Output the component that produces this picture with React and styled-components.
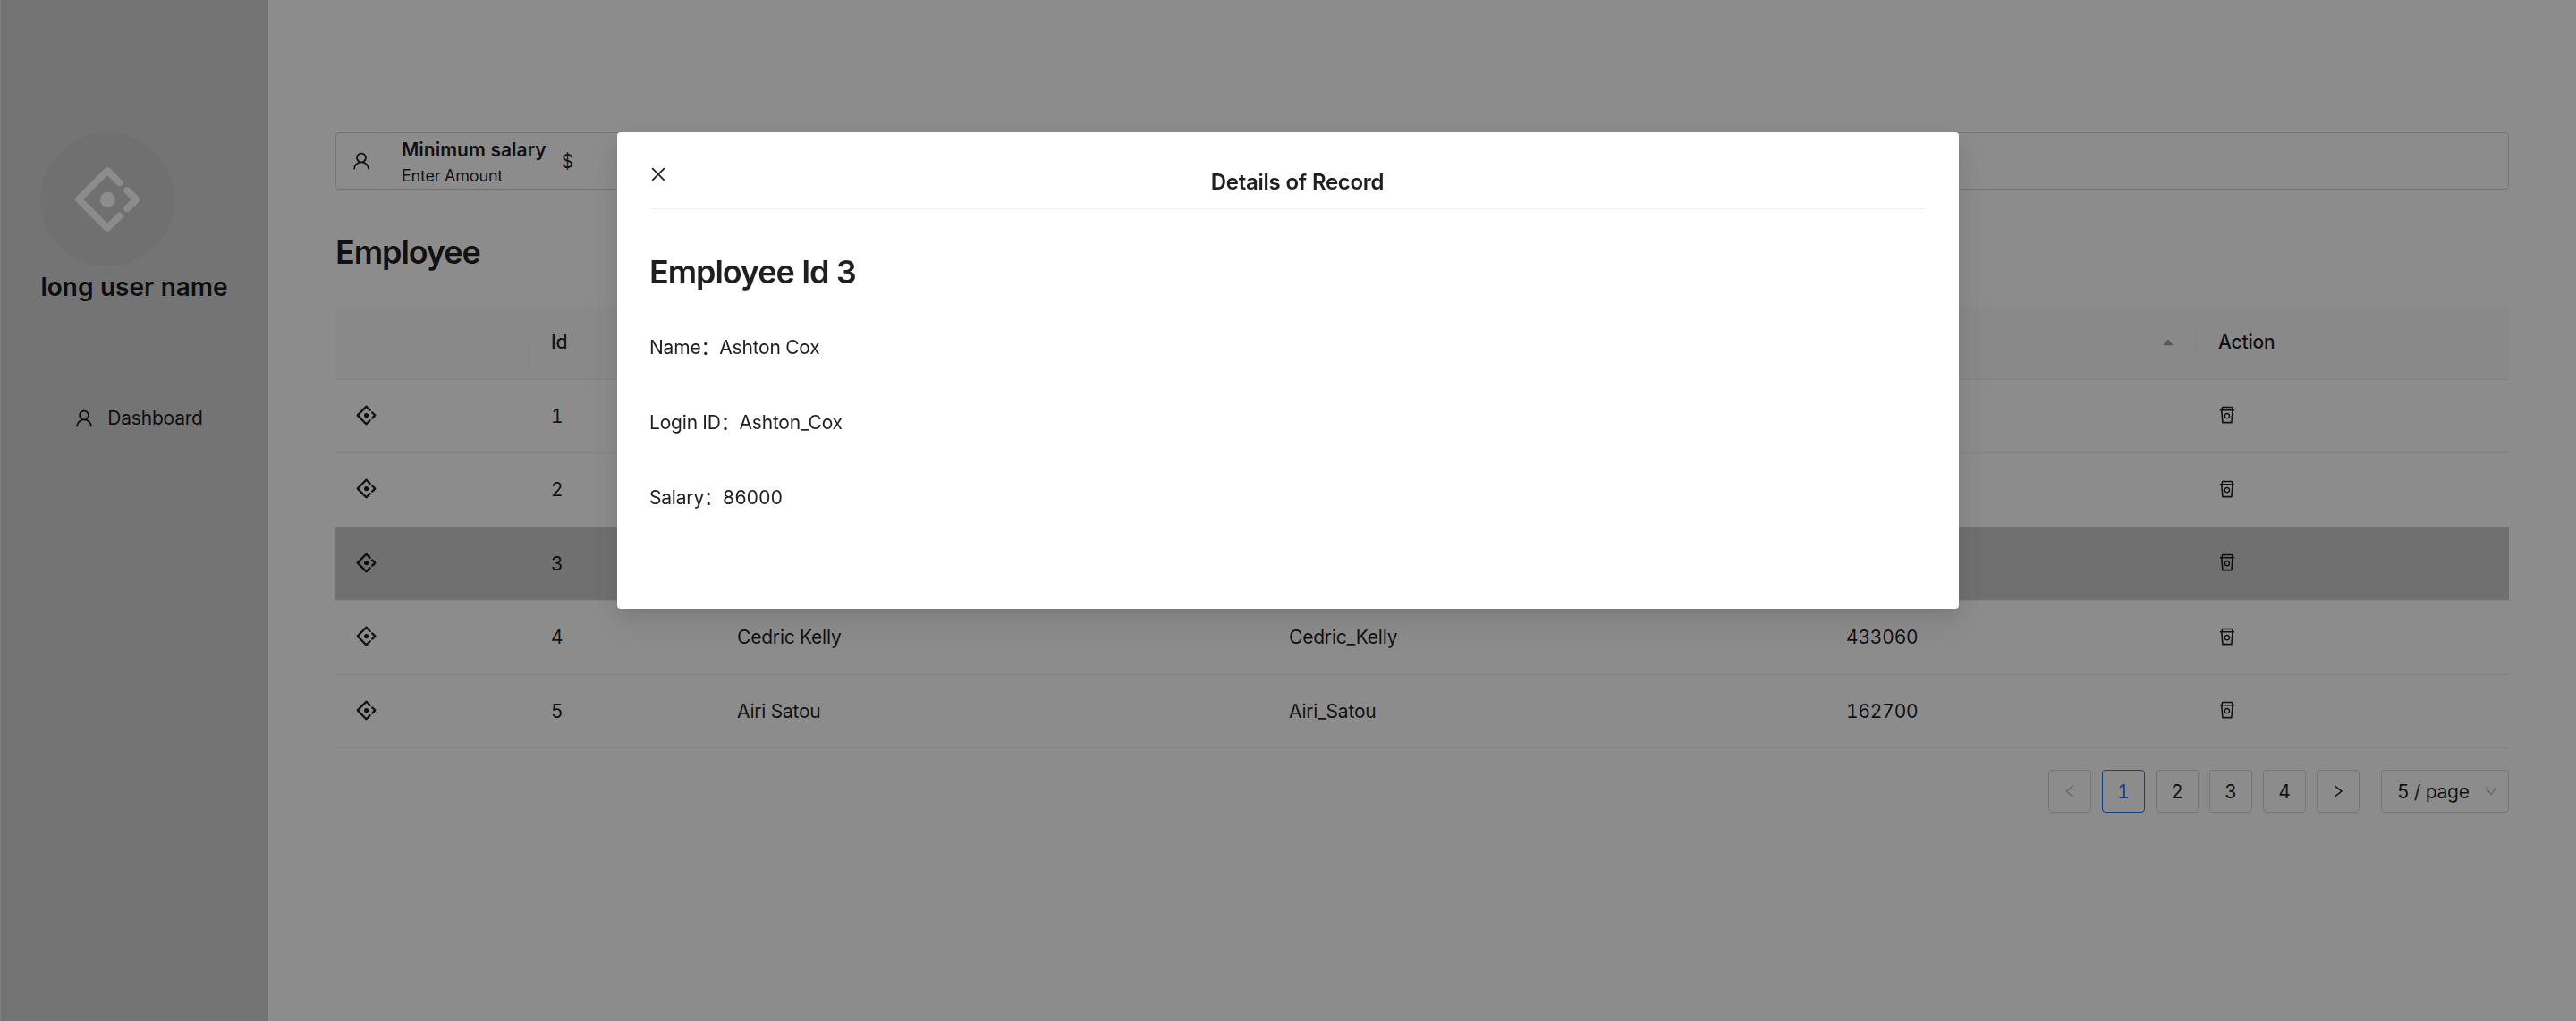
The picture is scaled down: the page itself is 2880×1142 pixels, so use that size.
import styled, { createGlobalStyle } from "styled-components";
import {
  AiOutlineAntDesign,
  AiOutlineClose,
  AiOutlineDown,
  AiOutlineLeft,
  AiOutlineRest,
  AiOutlineRight,
  AiOutlineUser,
  AiFillCaretUp,
} from "react-icons/ai";

const employees = [
  { id: 1, name: "Tiger Nixon", login: "Tiger_Nixon", salary: 320800 },
  { id: 2, name: "Garrett Winters", login: "Garrett_Winters", salary: 170750 },
  { id: 3, name: "Ashton Cox", login: "Ashton_Cox", salary: 86000 },
  { id: 4, name: "Cedric Kelly", login: "Cedric_Kelly", salary: 433060 },
  { id: 5, name: "Airi Satou", login: "Airi_Satou", salary: 162700 },
];

const GlobalStyle = createGlobalStyle`
  * {
    box-sizing: border-box;
  }
  html, body {
    margin: 0;
    height: 100%;
    background: #fff;
  }
  body {
    font-family: Inter, "Noto Sans CJK SC", sans-serif;
    font-size: 21px;
    line-height: 33px;
    letter-spacing: -0.2px;
    font-variant-numeric: tabular-nums;
    color: rgba(0, 0, 0, 0.88);
  }
`;

const Page = styled.div`
  display: flex;
  height: 100vh;
  overflow: hidden;
`;

const Sidebar = styled.aside`
  flex: 0 0 300px;
  display: flex;
  flex-direction: column;
  align-items: center;
  padding-top: 148px;
  border-left: 1px solid #eaeaea;
  background: #d4d4d4;
`;

const Avatar = styled.div`
  width: 150px;
  height: 150px;
  align-self: flex-start;
  margin-left: 44px;
  border-radius: 50%;
  display: flex;
  align-items: center;
  justify-content: center;
  background: #cccccc;
  color: #fff;
  font-size: 82px;
`;

const UserName = styled.div`
  margin-top: 3px;
  margin-right: 1px;
  font-size: 28px;
  line-height: 40px;
  font-weight: 600;
  letter-spacing: 0;
`;

const MenuItem = styled.div`
  display: flex;
  align-items: center;
  gap: 14px;
  margin-top: 110px;
  margin-left: 8px;
  svg {
    font-size: 24px;
  }
`;

const Main = styled.main`
  flex: 1;
  min-width: 0;
  padding: 148px 75px 0;
`;

const InputGroup = styled.div`
  display: flex;
  height: 64px;
  border: 1.5px solid #d9d9d9;
  border-radius: 4px;
`;

const InputAddon = styled.div`
  flex: 0 0 56px;
  display: flex;
  align-items: center;
  justify-content: center;
  border-right: 1.5px solid #d9d9d9;
  font-size: 24px;
`;

const InputBody = styled.div`
  display: flex;
  align-items: center;
  padding-left: 17px;
  gap: 17px;
`;

const InputLabels = styled.div`
  display: flex;
  flex-direction: column;
`;

const InputLabel = styled.span`
  font-weight: 600;
  line-height: 33px;
  letter-spacing: 0;
  margin-top: -1px;
`;

const InputHint = styled.span`
  font-size: 18px;
  line-height: 24px;
  margin-top: 1px;
`;

const PageTitle = styled.h1`
  margin: 48px 0 38px;
  font-size: 36px;
  line-height: 44px;
  font-weight: 600;
  letter-spacing: -1.1px;
`;

const Row = styled.div`
  display: grid;
  grid-template-columns: 216px 208px 617px 623px 416px 350px;
  height: 82.5px;
  align-items: center;
  border-bottom: 1.5px solid #f0f0f0;
  background: ${({ $selected, $head }) =>
    $selected ? "#cccccc" : $head ? "#fafafa" : "transparent"};
  font-weight: ${({ $head }) => ($head ? 500 : 400)};
`;

const Cell = styled.div`
  position: relative;
  display: flex;
  align-items: center;
  justify-content: space-between;
  padding: 0 25px;
  ${({ $divider }) =>
    $divider &&
    `&::after {
      content: "";
      position: absolute;
      right: 0;
      top: 0;
      height: 33px;
      border-right: 1.5px solid #f0f0f0;
    }`}
`;

const RowIcon = styled(AiOutlineAntDesign)`
  font-size: 25px;
  margin-left: -3px;
  margin-top: -2px;
`;

const ActionIcon = styled(AiOutlineRest)`
  font-size: 24px;
  margin-left: -2px;
  margin-top: -2px;
`;

const SortIcon = styled(AiFillCaretUp)`
  font-size: 16px;
  color: #a3a3a3;
  margin-right: -2px;
`;

const Pagination = styled.nav`
  display: flex;
  justify-content: flex-end;
  gap: 12px;
  margin-top: 24px;
`;

const PageButton = styled.div`
  width: 48px;
  height: 48px;
  display: flex;
  align-items: center;
  justify-content: center;
  border: 1.5px solid ${({ $active }) => ($active ? "#1677ff" : "#d9d9d9")};
  border-radius: 4px;
  color: ${({ $active, $disabled }) =>
    $active ? "#1677ff" : $disabled ? "#bfbfbf" : "inherit"};
  svg {
    font-size: 18px;
  }
`;

const PageSize = styled.div`
  width: 143px;
  height: 48px;
  margin-left: 12px;
  padding: 0 10px 0 17px;
  display: flex;
  align-items: center;
  justify-content: space-between;
  border: 1.5px solid #d9d9d9;
  border-radius: 4px;
  svg {
    font-size: 18px;
    color: #bfbfbf;
  }
`;

const Mask = styled.div`
  position: fixed;
  inset: 0;
  background: rgba(0, 0, 0, 0.45);
`;

const Modal = styled.div`
  width: 1500px;
  height: 533px;
  margin: 148px auto 0;
  padding: 36px;
  border-radius: 4px;
  background: #fff;
  box-shadow: 0 9px 24px 0 rgba(0, 0, 0, 0.08), 0 4px 9px -6px rgba(0, 0, 0, 0.12),
    0 14px 42px 12px rgba(0, 0, 0, 0.05);
`;

const ModalHeader = styled.div`
  display: flex;
  height: 49.5px;
  border-bottom: 1.5px solid #f0f0f0;
`;

const CloseIcon = styled(AiOutlineClose)`
  flex: none;
  font-size: 22px;
  margin-left: -1px;
`;

const ModalTitle = styled.div`
  flex: 1;
  padding-top: 2px;
  text-align: center;
  font-size: 24px;
  line-height: 36px;
  font-weight: 600;
  letter-spacing: -0.3px;
`;

const ModalHeading = styled.h2`
  margin: 48px 0 21px;
  font-size: 36px;
  line-height: 44px;
  font-weight: 600;
  letter-spacing: -1.1px;
`;

const DetailRow = styled.div`
  height: 84px;
  display: flex;
  align-items: center;
`;

const App = () => {
  const current = employees[2];

  return (
    <>
      <GlobalStyle />
      <Page>
        <Sidebar>
          <Avatar>
            <AiOutlineAntDesign />
          </Avatar>
          <UserName>long user name</UserName>
          <MenuItem>
            <AiOutlineUser />
            Dashboard
          </MenuItem>
        </Sidebar>

        <Main>
          <InputGroup>
            <InputAddon>
              <AiOutlineUser />
            </InputAddon>
            <InputBody>
              <InputLabels>
                <InputLabel>Minimum salary</InputLabel>
                <InputHint>Enter Amount</InputHint>
              </InputLabels>
              <span>$</span>
            </InputBody>
          </InputGroup>

          <PageTitle>Employee</PageTitle>

          <Row $head>
            <Cell $divider />
            <Cell>Id</Cell>
            <Cell>Name</Cell>
            <Cell>Login ID</Cell>
            <Cell $divider>
              Salary
              <SortIcon />
            </Cell>
            <Cell>Action</Cell>
          </Row>
          {employees.map((emp) => (
            <Row key={emp.id} $selected={emp.id === current.id}>
              <Cell>
                <RowIcon />
              </Cell>
              <Cell>{emp.id}</Cell>
              <Cell>{emp.name}</Cell>
              <Cell>{emp.login}</Cell>
              <Cell>{emp.salary}</Cell>
              <Cell>
                <ActionIcon />
              </Cell>
            </Row>
          ))}

          <Pagination>
            <PageButton $disabled>
              <AiOutlineLeft />
            </PageButton>
            <PageButton $active>1</PageButton>
            <PageButton>2</PageButton>
            <PageButton>3</PageButton>
            <PageButton>4</PageButton>
            <PageButton>
              <AiOutlineRight />
            </PageButton>
            <PageSize>
              5 / page
              <AiOutlineDown />
            </PageSize>
          </Pagination>
        </Main>
      </Page>

      <Mask>
        <Modal>
          <ModalHeader>
            <CloseIcon />
            <ModalTitle>Details of Record</ModalTitle>
          </ModalHeader>
          <ModalHeading>Employee Id {current.id}</ModalHeading>
          <DetailRow>Name：{current.name}</DetailRow>
          <DetailRow>Login ID：{current.login}</DetailRow>
          <DetailRow>Salary：{current.salary}</DetailRow>
        </Modal>
      </Mask>
    </>
  );
};

export default App;
